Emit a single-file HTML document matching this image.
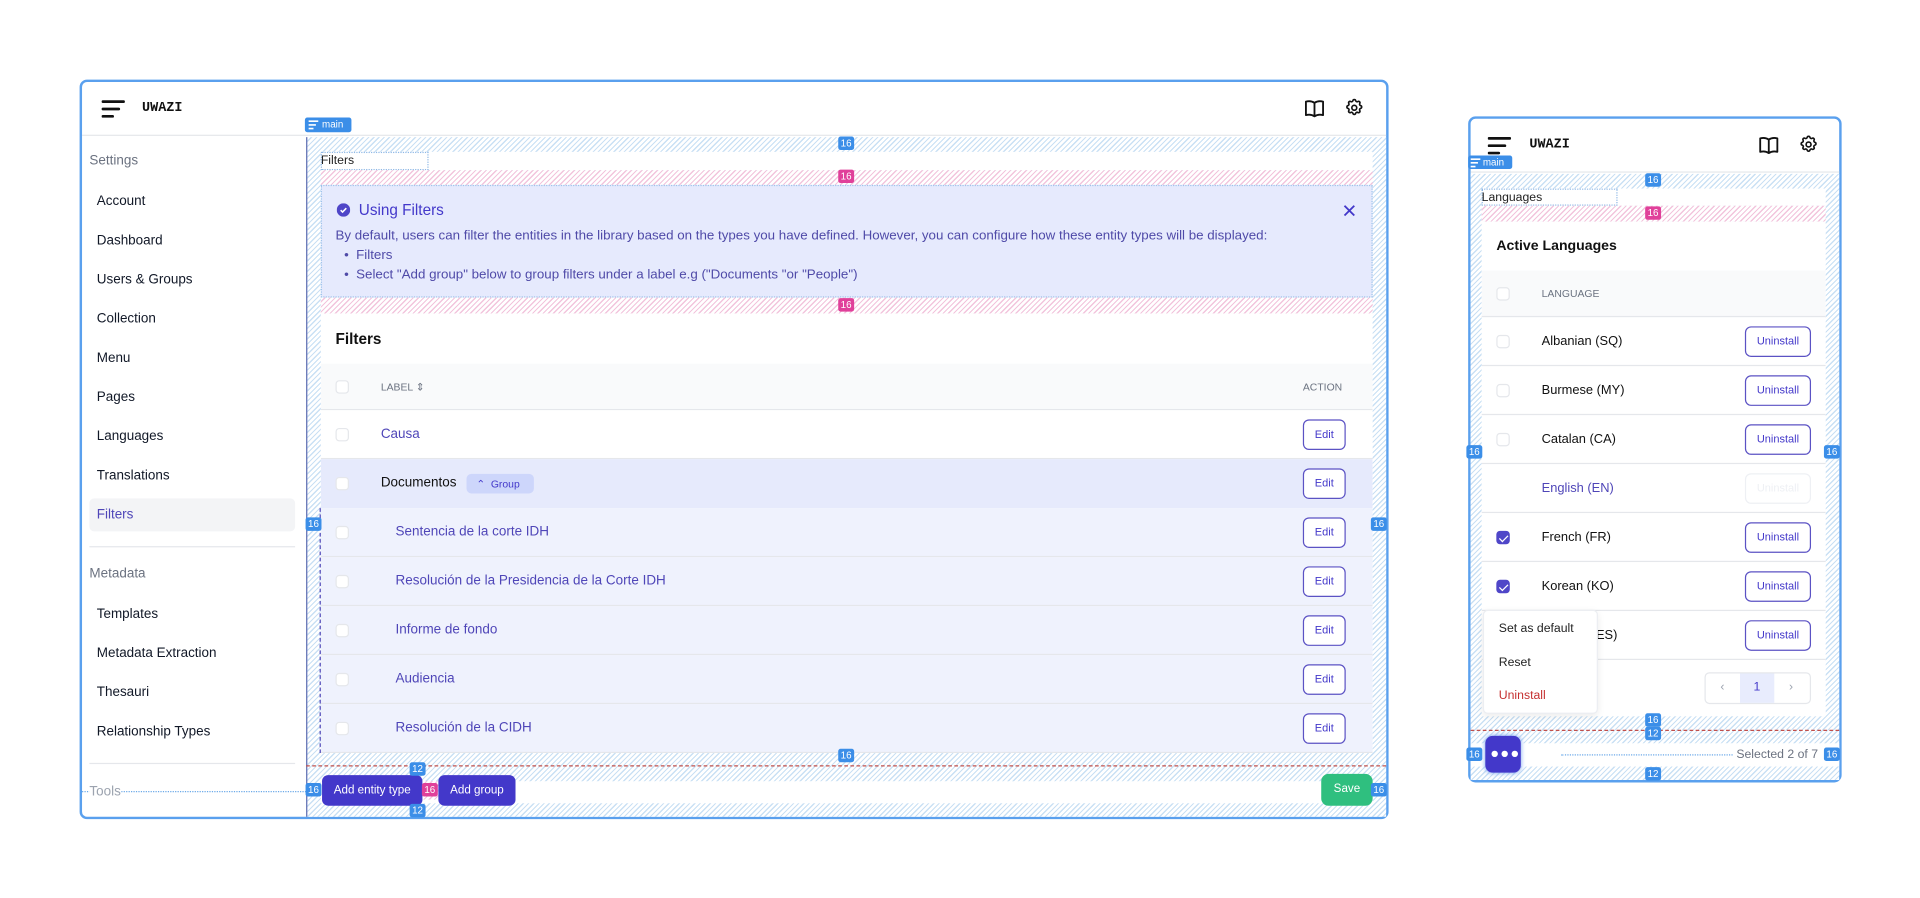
<!DOCTYPE html>
<html><head><meta charset="utf-8"><style>
*{box-sizing:border-box;margin:0;padding:0}
html,body{width:1920px;height:897px;overflow:hidden;background:#fff;font-family:"Liberation Sans",sans-serif}
#s{position:absolute;left:0;top:0;width:1568px;height:733px;transform:scale(1.22449);transform-origin:0 0}
.a{position:absolute}
.t{position:absolute;white-space:nowrap;line-height:1;transform:translateY(-50%)}
.frame{position:absolute;border:2px solid #5aa0ee;border-radius:6px;background:#fff;overflow:hidden}
.hatch{background:repeating-linear-gradient(135deg,#fff 0 2px,#c9e0f4 2px 3px)}
.phatch{background:repeating-linear-gradient(135deg,#fff 0 2px,#f2c4dc 2px 3px)}
.b{position:absolute;background:#3b8ee8;color:#fff;font-size:8px;line-height:11px;padding:0 2px;border-radius:2px;transform:translate(-50%,-50%)}
.bp{background:#e0409a}
.cb{position:absolute;width:11px;height:11px;border:1px solid #e5e7eb;border-radius:3px;background:#fff;transform:translateY(-50%)}
.cbc{background:#4f46c8;border-color:#4f46c8}
.cbc:after{content:"";position:absolute;left:3px;top:1px;width:3px;height:6px;border:solid #fff;border-width:0 1.3px 1.3px 0;transform:rotate(45deg)}
.edit{position:absolute;width:35px;height:25px;border:1px solid #5b52c4;border-radius:5px;background:#fff;color:#4338ca;font-size:9px;text-align:center;line-height:23px;transform:translateY(-50%)}
.un{position:absolute;width:54px;height:25px;border:1px solid #5b52c4;border-radius:5px;background:#fff;color:#4338ca;font-size:9px;text-align:center;line-height:23px;transform:translateY(-50%)}
.nav{font-size:11px;color:#111827}
.row{position:absolute;left:0;width:859px;height:40px;border-bottom:1px solid #e5e7eb}
.lrow{position:absolute;left:0;width:281px;height:40px;border-bottom:1px solid #e5e7eb}
</style></head><body><div id="s">

<div class="frame" style="left:65px;top:65px;width:1069px;height:604px"></div>
<div class="a" style="left:67px;top:67px;width:1065px;height:44px;border-bottom:1px solid #e5e7eb"></div>
<svg class="a" style="left:83px;top:81px" width="19" height="16" viewBox="0 0 19 16"><path d="M1 2h17M1 8h13M1 14h8" stroke="#111" stroke-width="2.2" stroke-linecap="round"/></svg>
<div class="t" style="left:116px;top:89px;font-family:'Liberation Mono',monospace;font-weight:bold;font-size:11px;color:#111">UWAZI</div>
<svg class="a" style="left:1065px;top:81px" width="17" height="15" viewBox="0 0 17 15"><path d="M8.5 3C6.5 1.6 3.5 1.5 1.5 2v11c2-.5 5-.4 7 1 2-1.4 5-1.5 7-1V2c-2-.5-5-.4-7 1zM8.5 3v11" fill="none" stroke="#111" stroke-width="1.5" stroke-linejoin="round"/></svg>
<svg class="a" style="left:1098px;top:80px" width="16" height="16" viewBox="0 0 24 24"><path d="M10.3 3.3c.4-1.8 3-1.8 3.4 0a1.7 1.7 0 0 0 2.6 1.1c1.5-.9 3.3.8 2.4 2.4a1.7 1.7 0 0 0 1 2.5c1.8.5 1.8 3 0 3.5a1.7 1.7 0 0 0-1 2.6c.9 1.5-.9 3.3-2.4 2.4a1.7 1.7 0 0 0-2.6 1c-.4 1.8-3 1.8-3.4 0a1.7 1.7 0 0 0-2.6-1c-1.5.9-3.3-.9-2.4-2.4a1.7 1.7 0 0 0-1-2.6c-1.8-.4-1.8-3 0-3.5a1.7 1.7 0 0 0 1-2.5c-.9-1.6.9-3.3 2.4-2.4a1.7 1.7 0 0 0 2.6-1.1z" fill="none" stroke="#111" stroke-width="2"/><circle cx="12" cy="12" r="3" fill="none" stroke="#111" stroke-width="2"/></svg>

<div class="t" style="left:73px;top:132px;font-size:11px;color:#6b7280">Settings</div>
<div class="t nav" style="left:79px;top:165px">Account</div>
<div class="t nav" style="left:79px;top:197px">Dashboard</div>
<div class="t nav" style="left:79px;top:229px">Users &amp; Groups</div>
<div class="t nav" style="left:79px;top:261px">Collection</div>
<div class="t nav" style="left:79px;top:293px">Menu</div>
<div class="t nav" style="left:79px;top:325px">Pages</div>
<div class="t nav" style="left:79px;top:357px">Languages</div>
<div class="t nav" style="left:79px;top:389px">Translations</div>
<div class="a" style="left:73px;top:407px;width:168px;height:27px;background:#f3f4f6;border-radius:4px"></div>
<div class="t nav" style="left:79px;top:421px;color:#4f46b8">Filters</div>
<div class="a" style="left:73px;top:446px;width:168px;height:1px;background:#e5e7eb"></div>
<div class="t" style="left:73px;top:469px;font-size:11px;color:#6b7280">Metadata</div>
<div class="t nav" style="left:79px;top:502px">Templates</div>
<div class="t nav" style="left:79px;top:534px">Metadata Extraction</div>
<div class="t nav" style="left:79px;top:566px">Thesauri</div>
<div class="t nav" style="left:79px;top:598px">Relationship Types</div>
<div class="a" style="left:73px;top:623px;width:168px;height:1px;background:#e5e7eb"></div>
<div class="a" style="left:67px;top:646px;width:183px;border-top:1px dotted #6aa8e8"></div>
<div class="t" style="left:73px;top:647px;font-size:11px;color:#9ca3af;background:#fff">Tools</div>

<div class="a hatch" style="left:250px;top:112px;width:882px;height:555px;border-left:1px solid #5b6bb0"></div>
<div class="a" style="left:262px;top:124px;width:859px;height:15px;background:#fff"></div>
<div class="a" style="left:262px;top:124px;width:88px;height:15px;border:1px dotted #8fb8e6"></div>
<div class="t" style="left:262px;top:132px;font-size:10px;color:#222">Filters</div>
<div class="a phatch" style="left:262px;top:139px;width:859px;height:12px"></div>
<div class="a" style="left:262px;top:151px;width:859px;height:92px;background:#e6eafd;border:1px dotted #9ec3ea"></div>
<svg class="a" style="left:275px;top:166px" width="11" height="11" viewBox="0 0 12 12"><circle cx="6" cy="6" r="6" fill="#4f46c8"/><path d="M3.5 6.2l1.7 1.6 3.3-3.4" fill="none" stroke="#fff" stroke-width="1.4"/></svg>
<div class="t" style="left:293px;top:172px;font-size:12.5px;color:#4338ca">Using Filters</div>
<div class="t" style="left:274px;top:193px;font-size:10.9px;color:#4f4aa8">By default, users can filter the entities in the library based on the types you have defined. However, you can configure how these entity types will be displayed:</div>
<div class="t" style="left:281px;top:209px;font-size:10.9px;color:#4f4aa8">•&nbsp; Filters</div>
<div class="t" style="left:281px;top:225px;font-size:10.9px;color:#4f4aa8">•&nbsp; Select "Add group" below to group filters under a label e.g ("Documents "or "People")</div>
<svg class="a" style="left:1097px;top:167px" width="10" height="10" viewBox="0 0 10 10"><path d="M1 1l8 8M9 1l-8 8" stroke="#4338ca" stroke-width="1.5"/></svg>
<div class="a phatch" style="left:262px;top:243px;width:859px;height:13px"></div>

<div class="a" style="left:262px;top:256px;width:859px;height:359px;background:#fff;overflow:hidden">
 <div class="t" style="left:12px;top:21px;font-size:12.5px;font-weight:bold;color:#111">Filters</div>
 <div class="a" style="left:0;top:41px;width:859px;height:38px;background:#f9fafb;border-bottom:1px solid #e5e7eb"></div>
 <div class="cb" style="left:12px;top:60px"></div>
 <div class="t" style="left:49px;top:60px;font-size:8.5px;color:#6b7280">LABEL ⇕</div>
 <div class="t" style="left:802px;top:60px;font-size:8.5px;color:#6b7280">ACTION</div>
 <div class="row" style="top:79px;background:#fff"><div class="cb" style="left:12px;top:20px"></div><div class="t" style="left:49px;top:20px;font-size:11px;color:#4f46b8">Causa</div><div class="edit" style="left:802px;top:20px">Edit</div></div>
 <div class="row" style="top:119px;background:#e6eafc;border:0"><div class="cb" style="left:12px;top:20px"></div><div class="t" style="left:49px;top:20px;font-size:11px;color:#111">Documentos</div><div class="a" style="left:119px;top:12px;width:55px;height:16px;background:#cdd6fb;border-radius:4px;color:#4338ca;font-size:8.5px;line-height:16px;padding-left:8px">⌃&nbsp; Group</div><div class="edit" style="left:802px;top:20px">Edit</div></div>
 <div class="row" style="top:159px;background:#eff2fd"><div class="cb" style="left:12px;top:20px"></div><div class="t" style="left:61px;top:20px;font-size:11px;color:#4f46b8">Sentencia de la corte IDH</div><div class="edit" style="left:802px;top:20px">Edit</div></div>
 <div class="row" style="top:199px;background:#eff2fd"><div class="cb" style="left:12px;top:20px"></div><div class="t" style="left:61px;top:20px;font-size:11px;color:#4f46b8">Resolución de la Presidencia de la Corte IDH</div><div class="edit" style="left:802px;top:20px">Edit</div></div>
 <div class="row" style="top:239px;background:#eff2fd"><div class="cb" style="left:12px;top:20px"></div><div class="t" style="left:61px;top:20px;font-size:11px;color:#4f46b8">Informe de fondo</div><div class="edit" style="left:802px;top:20px">Edit</div></div>
 <div class="row" style="top:279px;background:#eff2fd"><div class="cb" style="left:12px;top:20px"></div><div class="t" style="left:61px;top:20px;font-size:11px;color:#4f46b8">Audiencia</div><div class="edit" style="left:802px;top:20px">Edit</div></div>
 <div class="row" style="top:319px;background:#eff2fd"><div class="cb" style="left:12px;top:20px"></div><div class="t" style="left:61px;top:20px;font-size:11px;color:#4f46b8">Resolución de la CIDH</div><div class="edit" style="left:802px;top:20px">Edit</div></div>
</div>
<div class="a" style="left:261px;top:415px;height:200px;border-left:1px dashed #4f46b8"></div>
<div class="a" style="left:250px;top:625px;width:882px;border-top:1px dashed #c0504d"></div>
<div class="a" style="left:262px;top:638px;width:859px;height:18px;background:#fff"></div>
<div class="a" style="left:263px;top:633px;width:82px;height:25px;background:#4338ca;border-radius:5px;color:#fff;font-size:9.5px;line-height:25px;text-align:center">Add entity type</div>
<div class="a phatch" style="left:345px;top:638px;width:13px;height:15px"></div>
<div class="a" style="left:358px;top:633px;width:63px;height:25px;background:#4338ca;border-radius:5px;color:#fff;font-size:9.5px;line-height:25px;text-align:center">Add group</div>
<div class="a" style="left:1079px;top:632px;width:42px;height:26px;background:#2fbf7f;border-radius:6px;color:#fff;font-size:9.5px;line-height:26px;text-align:center">Save</div>

<div class="a" style="left:249px;top:96px;width:38px;height:12px;background:#3b8ee8;border-radius:2px;color:#fff;font-size:8px;line-height:12px;padding-left:14px">main</div>
<svg class="a" style="left:252px;top:98px" width="8" height="8" viewBox="0 0 8 8"><path d="M0 1h8M0 4h6M0 7h4" stroke="#fff" stroke-width="1.3"/></svg>
<div class="b" style="left:691px;top:117px">16</div>
<div class="b bp" style="left:691px;top:144px">16</div>
<div class="b bp" style="left:691px;top:249px">16</div>
<div class="b" style="left:256px;top:428px">16</div>
<div class="b" style="left:1126px;top:428px">16</div>
<div class="b" style="left:691px;top:617px">16</div>
<div class="b" style="left:341px;top:628px">12</div>
<div class="b" style="left:341px;top:662px">12</div>
<div class="b bp" style="left:351px;top:645px">16</div>
<div class="b" style="left:256px;top:645px">16</div>
<div class="b" style="left:1126px;top:645px">16</div>

<div class="frame" style="left:1199px;top:95px;width:305px;height:544px"></div>
<div class="a" style="left:1201px;top:97px;width:301px;height:44px;border-bottom:1px solid #e5e7eb"></div>
<svg class="a" style="left:1215px;top:111px" width="19" height="16" viewBox="0 0 19 16"><path d="M1 2h17M1 8h13M1 14h8" stroke="#111" stroke-width="2.2" stroke-linecap="round"/></svg>
<div class="t" style="left:1249px;top:119px;font-family:'Liberation Mono',monospace;font-weight:bold;font-size:11px;color:#111">UWAZI</div>
<svg class="a" style="left:1436px;top:111px" width="17" height="15" viewBox="0 0 17 15"><path d="M8.5 3C6.5 1.6 3.5 1.5 1.5 2v11c2-.5 5-.4 7 1 2-1.4 5-1.5 7-1V2c-2-.5-5-.4-7 1zM8.5 3v11" fill="none" stroke="#111" stroke-width="1.5" stroke-linejoin="round"/></svg>
<svg class="a" style="left:1469px;top:110px" width="16" height="16" viewBox="0 0 24 24"><path d="M10.3 3.3c.4-1.8 3-1.8 3.4 0a1.7 1.7 0 0 0 2.6 1.1c1.5-.9 3.3.8 2.4 2.4a1.7 1.7 0 0 0 1 2.5c1.8.5 1.8 3 0 3.5a1.7 1.7 0 0 0-1 2.6c.9 1.5-.9 3.3-2.4 2.4a1.7 1.7 0 0 0-2.6 1c-.4 1.8-3 1.8-3.4 0a1.7 1.7 0 0 0-2.6-1c-1.5.9-3.3-.9-2.4-2.4a1.7 1.7 0 0 0-1-2.6c-1.8-.4-1.8-3 0-3.5a1.7 1.7 0 0 0 1-2.5c-.9-1.6.9-3.3 2.4-2.4a1.7 1.7 0 0 0 2.6-1.1z" fill="none" stroke="#111" stroke-width="2"/><circle cx="12" cy="12" r="3" fill="none" stroke="#111" stroke-width="2"/></svg>
<div class="a hatch" style="left:1201px;top:142px;width:301px;height:495px"></div>
<div class="a" style="left:1210px;top:154px;width:281px;height:14px;background:#fff"></div>
<div class="a" style="left:1210px;top:154px;width:111px;height:14px;border:1px dotted #8fb8e6"></div>
<div class="t" style="left:1210px;top:162px;font-size:10px;color:#222">Languages</div>
<div class="a phatch" style="left:1210px;top:168px;width:281px;height:13px"></div>
<div class="a" style="left:1210px;top:181px;width:281px;height:404px;background:#fff;overflow:hidden">
 <div class="t" style="left:12px;top:21px;font-size:11.5px;font-weight:bold;color:#111">Active Languages</div>
 <div class="a" style="left:0;top:40px;width:281px;height:38px;background:#f9fafb;border-bottom:1px solid #e5e7eb"></div>
 <div class="cb" style="left:12px;top:59px"></div>
 <div class="t" style="left:49px;top:59px;font-size:8.5px;color:#6b7280">LANGUAGE</div>
 <div class="lrow" style="top:78px"><div class="cb" style="left:12px;top:20px"></div><div class="t" style="left:49px;top:20px;font-size:10.5px;color:#111">Albanian (SQ)</div><div class="un" style="left:215px;top:20px">Uninstall</div></div>
 <div class="lrow" style="top:118px"><div class="cb" style="left:12px;top:20px"></div><div class="t" style="left:49px;top:20px;font-size:10.5px;color:#111">Burmese (MY)</div><div class="un" style="left:215px;top:20px">Uninstall</div></div>
 <div class="lrow" style="top:158px"><div class="cb" style="left:12px;top:20px"></div><div class="t" style="left:49px;top:20px;font-size:10.5px;color:#111">Catalan (CA)</div><div class="un" style="left:215px;top:20px">Uninstall</div></div>
 <div class="lrow" style="top:198px"><div class="t" style="left:49px;top:20px;font-size:10.5px;color:#4f46b8">English (EN)</div><div class="un" style="left:215px;top:20px;border-color:#eef0f4;color:#eef0f4">Uninstall</div></div>
 <div class="lrow" style="top:238px"><div class="cb cbc" style="left:12px;top:20px"></div><div class="t" style="left:49px;top:20px;font-size:10.5px;color:#111">French (FR)</div><div class="un" style="left:215px;top:20px">Uninstall</div></div>
 <div class="lrow" style="top:278px"><div class="cb cbc" style="left:12px;top:20px"></div><div class="t" style="left:49px;top:20px;font-size:10.5px;color:#111">Korean (KO)</div><div class="un" style="left:215px;top:20px">Uninstall</div></div>
 <div class="lrow" style="top:318px"><div class="t" style="left:49px;top:20px;font-size:10.5px;color:#111">Spanish (ES)</div><div class="un" style="left:215px;top:20px">Uninstall</div></div>
 <div class="a" style="left:182px;top:368px;width:87px;height:26px;border:1px solid #e5e7eb;border-radius:4px;background:#fff"></div>
 <div class="a" style="left:211px;top:369px;width:28px;height:24px;background:#e8ecfd"></div>
 <div class="t" style="left:195px;top:381px;font-size:10px;color:#9ca3af">‹</div>
 <div class="t" style="left:222px;top:381px;font-size:10px;color:#4338ca">1</div>
 <div class="t" style="left:251px;top:381px;font-size:10px;color:#9ca3af">›</div>
</div>
<div class="a" style="left:1211px;top:498px;width:94px;height:85px;background:#fff;border:1px solid #eceef2;border-radius:4px;box-shadow:0 2px 6px rgba(0,0,0,.08)"></div>
<div class="t" style="left:1224px;top:514px;font-size:10px;color:#222">Set as default</div>
<div class="t" style="left:1224px;top:542px;font-size:10px;color:#222">Reset</div>
<div class="t" style="left:1224px;top:569px;font-size:10px;color:#c53030">Uninstall</div>
<div class="a" style="left:1201px;top:596px;width:301px;border-top:1px dashed #c0504d"></div>
<div class="a" style="left:1201px;top:607px;width:301px;height:19px;background:#fff"></div>
<div class="a" style="left:1213px;top:601px;width:29px;height:30px;background:#4338ca;border-radius:6px;box-shadow:0 0 4px #7aa5f0"></div>
<div class="t" style="left:1217px;top:615px;font-size:12px;color:#fff;letter-spacing:1px;font-weight:bold">●●●</div>
<div class="a" style="left:1275px;top:616px;width:140px;border-top:1px dotted #6aa8e8"></div>
<div class="t" style="left:1418px;top:617px;font-size:10px;color:#6b7280">Selected 2 of 7</div>
<div class="a" style="left:1199px;top:127px;width:36px;height:11px;background:#3b8ee8;border-radius:2px;color:#fff;font-size:8px;line-height:11px;padding-left:12px">main</div>
<svg class="a" style="left:1201px;top:129px" width="8" height="8" viewBox="0 0 8 8"><path d="M0 1h8M0 4h6M0 7h4" stroke="#fff" stroke-width="1.3"/></svg>
<div class="b" style="left:1350px;top:147px">16</div>
<div class="b bp" style="left:1350px;top:174px">16</div>
<div class="b" style="left:1204px;top:369px">16</div>
<div class="b" style="left:1496px;top:369px">16</div>
<div class="b" style="left:1350px;top:588px">16</div>
<div class="b" style="left:1350px;top:599px">12</div>
<div class="b" style="left:1350px;top:632px">12</div>
<div class="b" style="left:1204px;top:616px">16</div>
<div class="b" style="left:1496px;top:616px">16</div>
</div></body></html>
